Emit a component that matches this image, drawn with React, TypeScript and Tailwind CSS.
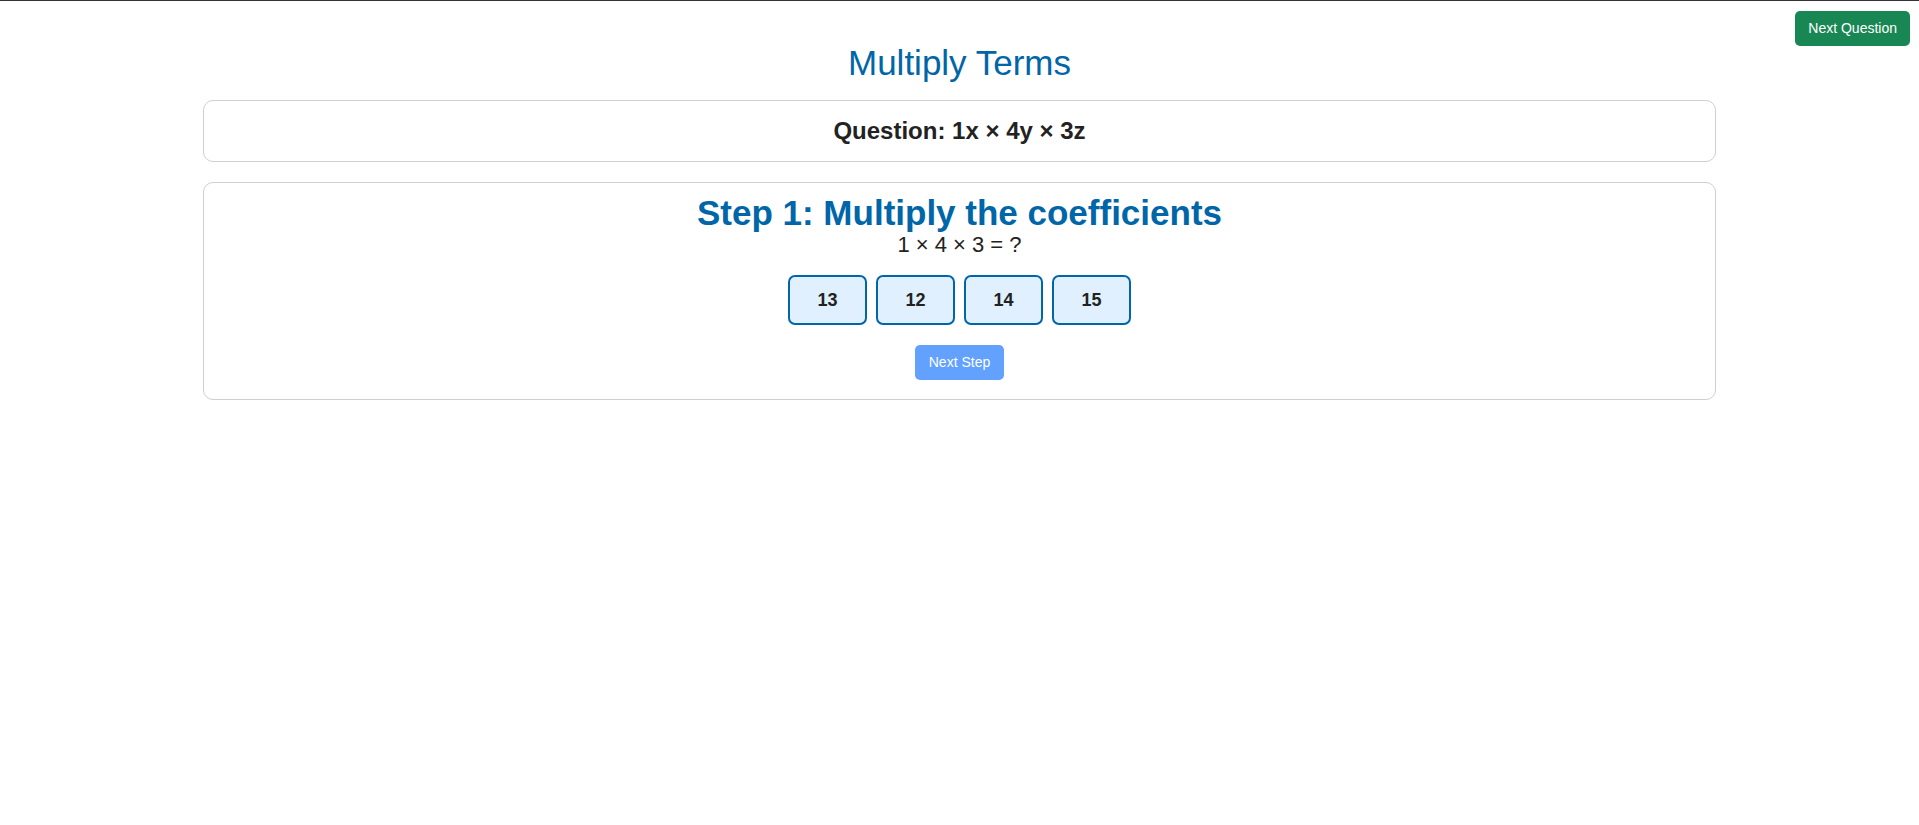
import { useState } from "react";

const options = [13, 12, 14, 15];

export default function App() {
  const [picked, setPicked] = useState<number | null>(null);

  return (
    <main
      className="relative min-h-[825px] bg-white border-t border-[#333] text-[#222]"
      style={{ fontFamily: '"Liberation Sans", Arial, sans-serif' }}
    >
      <button className="absolute top-[10px] right-[9px] h-[35px] px-[13px] rounded-[5px] bg-[#198754] text-white text-[14px]">
        Next Question
      </button>

      <div className="w-[1513px] mx-auto pt-[42px] flex flex-col">
        <h1 className="text-center text-[35px] leading-[40px] text-[#0066a8]">
          Multiply Terms
        </h1>

        <div className="mt-[17px] h-[62px] border border-[#cfcfcf] rounded-[10px] flex items-center justify-center">
          <p className="text-[24px] font-bold leading-[28px]">
            Question: 1x × 4y × 3z
          </p>
        </div>

        <div className="mt-[20px] border border-[#cfcfcf] rounded-[10px] pt-[10px] pb-[19px] flex flex-col items-center">
          <h2 className="text-[35px] leading-[40px] font-bold text-[#0066a8]">
            Step 1: Multiply the coefficients
          </h2>
          <p className="text-[22px] leading-[24px]">1 × 4 × 3 = ?</p>

          <div className="mt-[18px] flex gap-[9px]">
            {options.map((n) => (
              <button
                key={n}
                onClick={() => setPicked(n)}
                className={
                  picked === n
                    ? "w-[79px] h-[50px] rounded-[7px] border-2 border-[#0066a8] bg-[#b9dcff] text-[18px] font-bold"
                    : "w-[79px] h-[50px] rounded-[7px] border-2 border-[#0066a8] bg-[#e0f0ff] text-[18px] font-bold"
                }
              >
                {n}
              </button>
            ))}
          </div>

          <button
            disabled={picked === null}
            className="mt-[20px] h-[35px] px-[14px] rounded-[5px] bg-[#0d6efd] disabled:bg-[#62a1fe] text-white text-[14px]"
          >
            Next Step
          </button>
        </div>
      </div>
    </main>
  );
}
